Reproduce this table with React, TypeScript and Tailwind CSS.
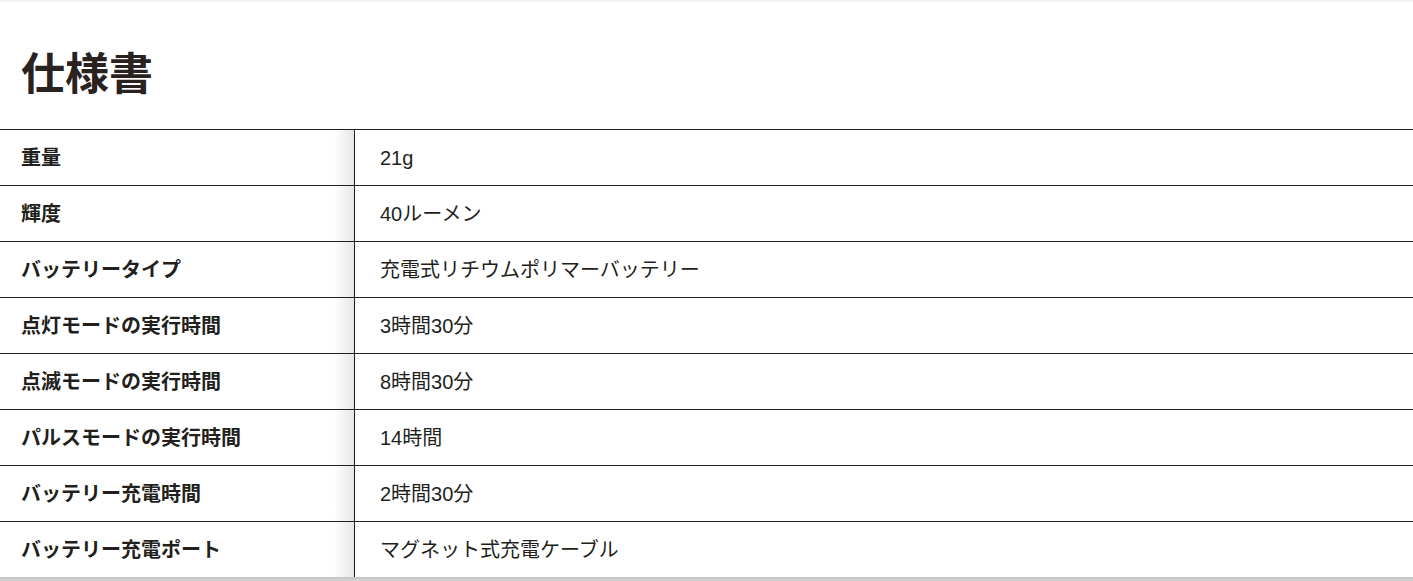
const specs: [string, string][] = [
  ["重量", "21g"],
  ["輝度", "40ルーメン"],
  ["バッテリータイプ", "充電式リチウムポリマーバッテリー"],
  ["点灯モードの実行時間", "3時間30分"],
  ["点滅モードの実行時間", "8時間30分"],
  ["パルスモードの実行時間", "14時間"],
  ["バッテリー充電時間", "2時間30分"],
  ["バッテリー充電ポート", "マグネット式充電ケーブル"],
];

export default function App() {
  return (
    <div
      className="w-[1413px] h-[581px] overflow-hidden bg-white text-[#231f1c]"
      style={{ fontFamily: '"Liberation Sans", "Noto Sans CJK JP", sans-serif' }}
    >
      <div className="h-[2px] bg-[#f1f1f1]" />
      <h1 className="pl-[21px] pt-[49px] pb-[30px] text-[44px] leading-[48px] font-bold text-[#2a221e]">
        仕様書
      </h1>
      <div className="border-t border-[#231f1c]">
        {specs.map(([label, value], i) => (
          <div
            key={label}
            className={
              i === 0
                ? "grid grid-cols-[354px_1fr] h-[55px]"
                : "grid grid-cols-[354px_1fr] h-[56px] border-t border-[#231f1c]"
            }
          >
            <div className="flex items-center pl-[21px] pt-[1px] text-[20px] font-bold bg-[linear-gradient(to_left,#e6e6e6,#ffffff_20px)]">
              {label}
            </div>
            <div className="flex items-center pl-[25px] pt-[1px] text-[20px] border-l border-[#231f1c]">
              {value}
            </div>
          </div>
        ))}
      </div>
      <div className="h-[5px] bg-[linear-gradient(to_bottom,#c4c4c4,#d8d8d8)]" />
    </div>
  );
}
